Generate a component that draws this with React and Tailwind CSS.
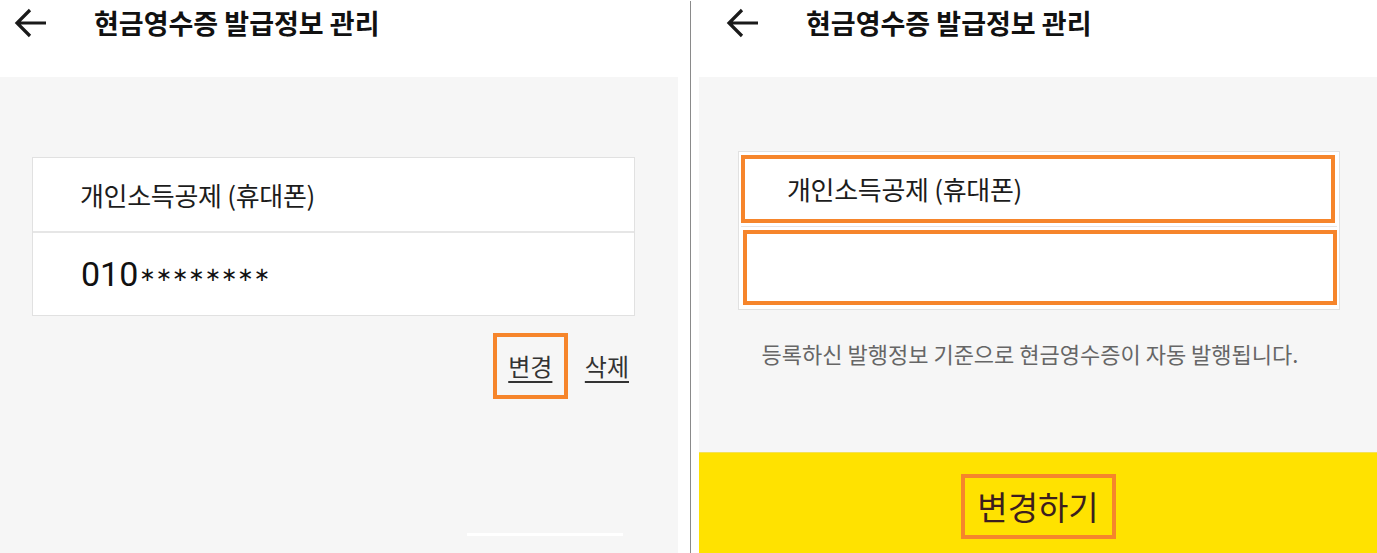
import React from "react";

const KR = { fontFamily: '"Noto Sans CJK KR", "Noto Sans", sans-serif' };

function BackArrow() {
  return (
    <svg width="34" height="32" viewBox="0 0 34 32" fill="none">
      <path d="M3 16 H32 M16 3 L3 16 L16 29" stroke="#1a1a1a" strokeWidth="3.2" strokeLinecap="butt" strokeLinejoin="miter" />
    </svg>
  );
}

export default function App() {
  return (
    <div className="w-[1377px] h-[553px] bg-white flex overflow-hidden" style={KR}>
      {/* Left panel */}
      <div className="w-[678px] h-full flex flex-col">
        <div className="h-[77px] bg-white flex items-start pt-[7px]">
          <div className="pl-[14px]"><BackArrow /></div>
          <div className="ml-[46px] text-[27px] font-bold leading-[32px] text-[#111]">
            현금영수증 발급정보 관리
          </div>
        </div>
        <div className="flex-1 bg-[#f6f6f6] flex flex-col pt-[80px]">
          <div className="ml-[32px] w-[603px] border border-[#e1e1e1] bg-white">
            <div className="h-[75px] flex items-center pl-[47px] border-b-2 border-[#e6e6e6]">
              <span className="text-[26px] text-[#1c1c1c] leading-none tracking-[-0.3px]">개인소득공제 (휴대폰)</span>
            </div>
            <div className="h-[82px] flex items-center pl-[48px]">
              <span className="text-[34px] leading-none text-[#111]" style={{ fontFamily: 'Roboto, "Noto Sans", sans-serif' }}>010</span>
              <span className="text-[19.5px] leading-none text-[#111] ml-[1px] mt-[2px]" style={{ fontFamily: '"DejaVu Sans", sans-serif' }}>∗∗∗∗∗∗∗∗</span>
            </div>
          </div>
          <div className="flex justify-end items-center pr-[49px] mt-[17px] gap-[17px]">
            <div className="w-[75px] h-[66px] border-4 border-[#f6852b] flex items-center justify-center">
              <span className="text-[24px] text-[#333] underline underline-offset-[5px] leading-none">변경</span>
            </div>
            <span className="text-[24px] text-[#333] underline underline-offset-[5px] leading-none">삭제</span>
          </div>
          <div className="ml-[467px] w-[156px] h-[3px] bg-white mt-[134px]" />
        </div>
      </div>

      {/* divider */}
      <div className="w-[12px] bg-white" />
      <div className="w-px bg-[#8a8a8a] mt-px" />
      <div className="w-[8px] bg-white" />

      {/* Right panel */}
      <div className="flex-1 h-full flex flex-col">
        <div className="h-[77px] bg-white flex items-start pt-[7px]">
          <div className="pl-[27px]"><BackArrow /></div>
          <div className="ml-[46px] text-[27px] font-bold leading-[32px] text-[#111]">
            현금영수증 발급정보 관리
          </div>
        </div>
        <div className="flex-1 bg-[#f6f6f6] flex flex-col pt-[74px]">
          <div className="ml-[39px] w-[602px] border border-[#e1e1e1] bg-white px-[2px] pt-[3px] pb-[4px]">
            <div className="h-[68px] mr-[2px] border-4 border-[#f6852b] flex items-center pl-[42px]">
              <span className="text-[26px] text-[#1c1c1c] leading-none tracking-[-0.3px]">개인소득공제 (휴대폰)</span>
            </div>
            <div className="h-px bg-[#e6e6e6] my-[3px]" />
            <div className="h-[75px] ml-[2px] border-4 border-[#f6852b]" />
          </div>
          <div className="mt-[30px] text-center text-[22px] leading-[26px] text-[#666] pr-[16px]">
            등록하신 발행정보 기준으로 현금영수증이 자동 발행됩니다.
          </div>
          <div className="flex-1" />
          <div className="h-[101px] bg-[#ffe200] border-t border-[#f4e157] flex justify-center pt-[21px]">
            <div className="w-[155px] h-[65px] border-4 border-[#f6852b] flex items-center justify-center">
              <span className="text-[33px] leading-none text-[#3c1e1e]">변경하기</span>
            </div>
          </div>
        </div>
      </div>
    </div>
  );
}
